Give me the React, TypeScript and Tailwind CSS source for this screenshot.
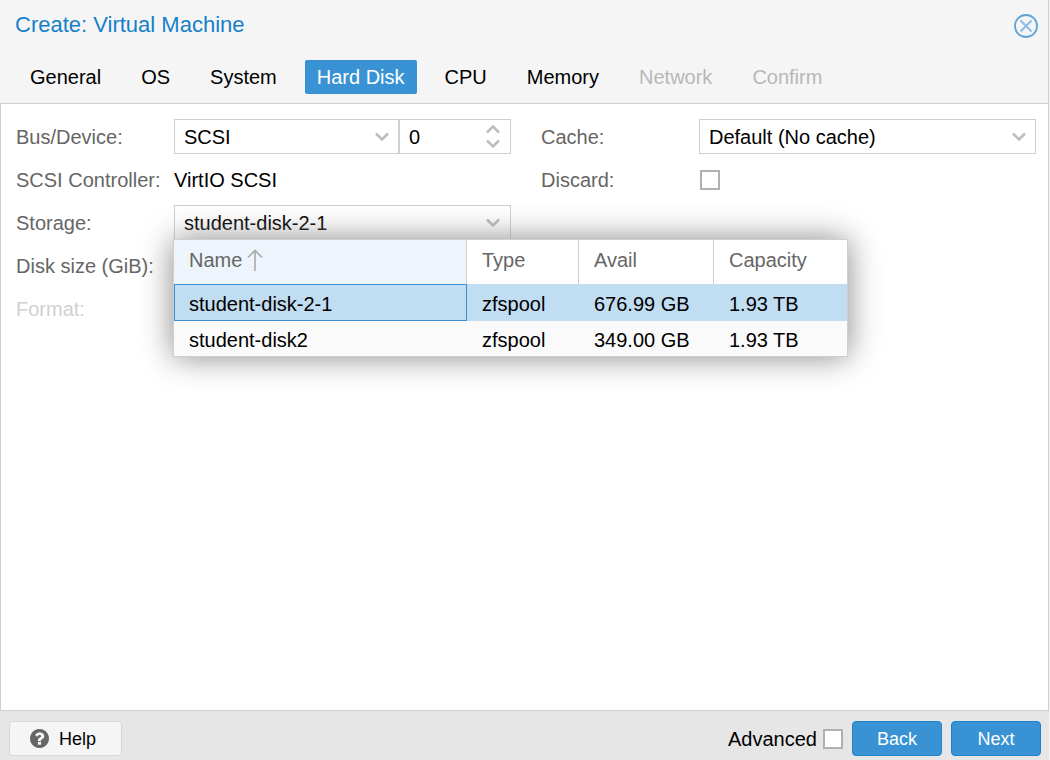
import { useState, type ReactNode } from "react";

type Step = { name: string; disabled?: boolean };

const steps: Step[] = [
  { name: "General" },
  { name: "OS" },
  { name: "System" },
  { name: "Hard Disk" },
  { name: "CPU" },
  { name: "Memory" },
  { name: "Network", disabled: true },
  { name: "Confirm", disabled: true },
];

const storages = [
  { name: "student-disk-2-1", type: "zfspool", avail: "676.99 GB", capacity: "1.93 TB" },
  { name: "student-disk2", type: "zfspool", avail: "349.00 GB", capacity: "1.93 TB" },
];

function Chevron({ up = false }: { up?: boolean }) {
  return (
    <svg width="14" height="9" viewBox="0 0 14 9" fill="none" stroke="#bdbdbd" strokeWidth="2.5" aria-hidden="true">
      <path d={up ? "M1 7.5 7 1.5l6 6" : "M1 1.5l6 6 6-6"} />
    </svg>
  );
}

function Row({ label, id, muted = false, children }: { label: string; id: string; muted?: boolean; children?: ReactNode }) {
  return (
    <div className="flex h-[35px] items-center">
      <label htmlFor={id} className={muted ? "w-[158px] shrink-0 text-[#d0d0d0]" : "w-[158px] shrink-0 text-[#666]"}>
        {label}
      </label>
      {children}
    </div>
  );
}

function Select({ id, value }: { id: string; value: string }) {
  return (
    <div className="relative h-full min-w-0 flex-1">
      <select
        id={id}
        defaultValue={value}
        className="h-full w-full appearance-none border border-[#cfcfcf] bg-white pr-8 pl-[9px] text-black outline-none"
      >
        <option>{value}</option>
      </select>
      <span className="pointer-events-none absolute top-[13px] right-[10px]">
        <Chevron />
      </span>
    </div>
  );
}

function StoragePicker({ selected, onSelect }: { selected: string; onSelect: (name: string) => void }) {
  return (
    <div className="absolute top-[34px] -left-px z-10 w-[675px] border border-[#cfcfcf] bg-white shadow-[0_0_30px_#888]">
      <table className="w-full table-fixed border-separate border-spacing-0 text-left">
        <thead>
          <tr className="h-[44px] text-[#666]">
            <th className="w-[293px] border-r border-[#cfcfcf] bg-[#edf4fb] px-[15px] pb-1 font-normal">
              <span className="flex items-center gap-[5px]">
                Name
                <svg width="16" height="22" viewBox="0 0 16 22" fill="none" stroke="#aaa" strokeWidth="1.6" aria-hidden="true">
                  <path d="M8 22V1.5M1 8.5l7-7 7 7" />
                </svg>
              </span>
            </th>
            <th className="w-[112px] border-r border-[#cfcfcf] px-[15px] pb-1 font-normal">Type</th>
            <th className="w-[135px] border-r border-[#cfcfcf] px-[15px] pb-1 font-normal">Avail</th>
            <th className="px-[15px] pb-1 font-normal">Capacity</th>
          </tr>
        </thead>
        <tbody>
          {storages.map((s) => {
            const active = s.name === selected;
            return (
              <tr
                key={s.name}
                onClick={() => onSelect(s.name)}
                className={active ? "h-[37px] bg-[#c1ddf1]" : "h-[35px] bg-[#fafafa]"}
              >
                <td className={active ? "px-[15px] pt-0.5 inset-ring inset-ring-[#3892d4]" : "px-[15px] pt-0.5"}>
                  {s.name}
                </td>
                <td className="px-[15px] pt-0.5">{s.type}</td>
                <td className="px-[15px] pt-0.5">{s.avail}</td>
                <td className="px-[15px] pt-0.5">{s.capacity}</td>
              </tr>
            );
          })}
        </tbody>
      </table>
    </div>
  );
}

const checkbox =
  "size-5 appearance-none border-2 border-[#b0b0b0] bg-white checked:bg-[#3892d4]";
const primary =
  "h-[35px] w-[90px] rounded-[4px] border border-[#1f82cc] bg-[#3892d4] text-[18px] text-white";

export default function App() {
  const [step, setStep] = useState("Hard Disk");
  const [storage, setStorage] = useState("student-disk-2-1");

  return (
    <div className="flex min-h-screen flex-col bg-[#f5f5f5] pr-px font-['Liberation_Sans',Arial,sans-serif] text-[20px] leading-6 text-black">
      <header className="border-r border-[#cfcfcf]">
        <div className="flex h-[60px] items-start justify-between pt-[13px] pr-[10px] pl-[15px]">
          <h1 className="text-[22px] leading-6 text-[#157fcc]">Create: Virtual Machine</h1>
          <button type="button" aria-label="Close">
            <svg width="24" height="26" viewBox="0 0 24 26" fill="none" aria-hidden="true">
              <circle cx="12" cy="13" r="11" stroke="#5fa5d8" strokeWidth="1.8" />
              <path d="M6.5 7.5l11 11M17.5 7.5l-11 11" stroke="#8dbce6" strokeWidth="2" />
            </svg>
          </button>
        </div>
        <nav className="flex gap-4 pb-[9px] pl-[18px]">
          {steps.map((s) => (
            <button
              key={s.name}
              type="button"
              disabled={s.disabled}
              onClick={() => setStep(s.name)}
              className={
                s.name === step
                  ? "h-[34px] rounded-[2px] bg-[#3892d4] px-3 text-white"
                  : "h-[34px] px-3 text-black disabled:text-[#b8b8b8]"
              }
            >
              {s.name}
            </button>
          ))}
        </nav>
      </header>

      <main className="grid flex-1 grid-cols-2 content-start gap-x-[30px] border border-[#cfcfcf] bg-white px-3 pt-[15px] pl-[15px]">
        <section className="flex flex-col gap-2">
          <Row label="Bus/Device:" id="bus">
            <div className="flex h-full flex-1">
              <Select id="bus" value="SCSI" />
              <div className="flex w-[112px] items-center border border-[#cfcfcf] pr-[10px]">
                <input aria-label="Device number" defaultValue="0" className="w-full min-w-0 flex-1 pl-[9px] outline-none" />
                <span className="flex flex-col gap-[5px]">
                  <Chevron up />
                  <Chevron />
                </span>
              </div>
            </div>
          </Row>
          <Row label="SCSI Controller:" id="controller">
            <output id="controller">VirtIO SCSI</output>
          </Row>
          <Row label="Storage:" id="storage">
            <div className="relative h-full flex-1">
              <div className="flex h-full items-center border border-[#cfcfcf] pr-[10px]">
                <input
                  id="storage"
                  role="combobox"
                  aria-expanded="true"
                  readOnly
                  value={storage}
                  className="min-w-0 flex-1 pl-[9px] outline-none"
                />
                <Chevron />
              </div>
              <StoragePicker selected={storage} onSelect={setStorage} />
            </div>
          </Row>
          <Row label="Disk size (GiB):" id="size">
            <input id="size" className="h-full min-w-0 flex-1 border border-[#cfcfcf]" />
          </Row>
          <Row label="Format:" id="format" muted>
            <input id="format" disabled className="h-full min-w-0 flex-1 border border-[#e7e7e7]" />
          </Row>
        </section>
        <section className="flex flex-col gap-2">
          <Row label="Cache:" id="cache">
            <Select id="cache" value="Default (No cache)" />
          </Row>
          <Row label="Discard:" id="discard">
            <input id="discard" type="checkbox" className={checkbox + " ml-px"} />
          </Row>
        </section>
      </main>

      <footer className="flex items-center bg-[#e6e6e6] pt-[10px] pr-2 pb-1 pl-[9px]">
        <button
          type="button"
          className="flex h-[35px] w-[113px] items-center gap-[10px] rounded-[4px] border border-[#d8d8d8] bg-[#f5f5f5] pl-5 text-[18px]"
        >
          <svg width="19" height="19" viewBox="128 128 1536 1536" fill="#666" aria-hidden="true">
            <path d="M1024 1376v-192q0-14-9-23t-23-9h-192q-14 0-23 9t-9 23v192q0 14 9 23t23 9h192q14 0 23-9t9-23zM1280 704q0-88-55.5-163t-138.5-116-170-41q-243 0-371 213-15 24 8 42l132 100q7 6 19 6 16 0 25-12 53-68 86-92 34-24 86-24 48 0 85.5 26t37.5 59q0 38-20 61t-68 45q-63 28-115.5 86.5t-52.5 125.5v36q0 14 9 23t23 9h192q14 0 23-9t9-23q0-19 21.5-49.5t54.5-49.5q32-18 49-28.5t46-35 44.5-48 28-60.5 12.5-81zM1664 896q0 209-103 385.5t-279.5 279.5-385.5 103-385.5-103-279.5-279.5-103-385.5 103-385.5 279.5-279.5 385.5-103 385.5 103 279.5 279.5 103 385.5z" />
          </svg>
          Help
        </button>
        <div className="ml-auto flex items-center gap-[9px]">
          <label className="flex items-center gap-[6px]">
            Advanced
            <input type="checkbox" className={checkbox} />
          </label>
          <button type="button" className={primary}>
            Back
          </button>
          <button type="button" className={primary}>
            Next
          </button>
        </div>
      </footer>
    </div>
  );
}
